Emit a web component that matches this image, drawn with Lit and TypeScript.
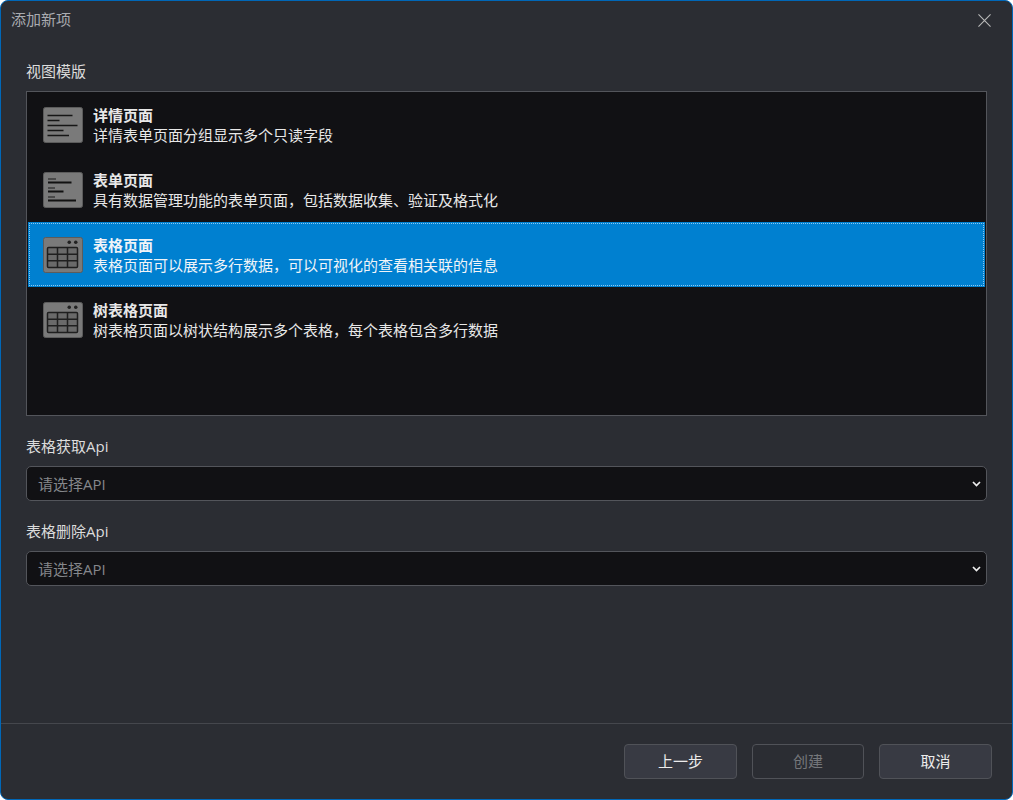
import { LitElement, html, css, svg } from "lit";
import { customElement } from "lit/decorators.js";

const detailIcon = svg`<rect x="0.5" y="0.5" width="39" height="35" rx="2" fill="#7a7a7a" stroke="#5c5c5c"/>
<g stroke="#161616" stroke-width="1.3"><path d="M4.500 8.500h25M4.500 13.500h12M4.500 18.500h30M4.500 23.500h16M4.500 28.500h21.500"/></g>`;
const formIcon = svg`<rect x="0.5" y="0.5" width="39" height="35" rx="2" fill="#7a7a7a" stroke="#5c5c5c"/>
<path d="M5 7h8M5 16h7M5 25h7" stroke="#3a3a3a" stroke-width="1.300"/>
<path d="M5 10.500h23.500M5 19.500h15.500M5 28.500h28" stroke="#111" stroke-width="2.200"/>`;
const tableIcon = svg`<rect x="0.5" y="0.5" width="39" height="35" rx="2" fill="#7a7a7a" stroke="#5c5c5c"/>
<rect x="24.500" y="3.500" width="3.500" height="3.500" rx="1.700" fill="#222"/><rect x="31" y="3.500" width="3.500" height="3.500" rx="1.700" fill="#222"/>
<rect x="4.500" y="10.500" width="30" height="20" rx="1" fill="#6a6a6a" stroke="#1f1f1f" stroke-width="1.500"/>
<path d="M14.500 10.500v20M24.500 10.500v20M4.500 17.200h30M4.500 23.800h30" stroke="#1f1f1f" stroke-width="1.500" fill="none"/>`;

const items = [
  { t: "详情页面", d: "详情表单页面分组显示多个只读字段", i: detailIcon },
  { t: "表单页面", d: "具有数据管理功能的表单页面，包括数据收集、验证及格式化", i: formIcon },
  { t: "表格页面", d: "表格页面可以展示多行数据，可以可视化的查看相关联的信息", i: tableIcon, sel: true },
  { t: "树表格页面", d: "树表格页面以树状结构展示多个表格，每个表格包含多行数据", i: tableIcon },
];

@customElement("app-root")
export class AppRoot extends LitElement {
  static styles = css`
    :host { display: block; }
    * { box-sizing: border-box; }
    .win {
      width: 1013px; height: 800px; display: flex; flex-direction: column;
      background: #2b2d33; border: 1px solid #0067b8; border-radius: 8px;
      font-family: "Open Sans", "Noto Sans CJK SC", sans-serif;
      font-size: 15px; color: #e6e6e6; overflow: hidden;
    }
    .head { height: 37px; flex: none; display: flex; align-items: center; justify-content: space-between; padding: 0 21px 0 10px; }
    .title { color: #a9abb0; line-height: 20px; margin-top: -2px; }
    .close { width: 13px; height: 13px; display: block; margin-top: 1px; }
    .body { flex: 1; padding: 0 25px; display: flex; flex-direction: column; }
    .label { height: 20px; line-height: 20px; color: #dcdcdc; }
    .l1 { margin-top: 23px; margin-bottom: 10px; }
    .list { height: 325px; background: #111114; border: 1px solid #53555b; flex: none; padding: 0 1px; }
    .item { height: 65px; display: flex; padding: 15px 0 0 15px; gap: 10px; color: #e8e8e8; }
    .item.sel { background: #0080d0; outline: 1px dotted #8cc8ee; outline-offset: -2px; color: #f0f4f8; }
    .icon { width: 40px; height: 36px; flex: none; display: block; }
    .txt { display: flex; flex-direction: column; margin-top: -1px; }
    .txt b { font-weight: 700; line-height: 19px; }
    .txt span { line-height: 20px; }
    .l2 { margin-top: 20px; margin-bottom: 10px; }
    .l3 { margin-top: 20px; margin-bottom: 10px; }
    .select {
      height: 35px; flex: none; background: #111114; border: 1px solid #53555b; border-radius: 5px;
      display: flex; align-items: center; justify-content: space-between; padding: 0 5px 0 11px; color: #85878b;
    }
    .select span { margin-top: -1px; }
    .chev { width: 9px; height: 6px; display: block; }
    .foot {
      flex: none; height: 76px; border-top: 1px solid #45474d; display: flex; justify-content: flex-end;
      align-items: flex-start; padding: 20px 20px 0 0; gap: 15px;
    }
    .btn {
      width: 113px; height: 35px; border: 1px solid #505258; border-radius: 4px; background: #383a43;
      display: flex; align-items: center; justify-content: center; color: #ececec; font: inherit; padding: 0 0 2px;
    }
    .btn.dis { background: #2b2d33; color: #75777b; width: 112px; }
  `;

  render() {
    return html`<div class="win">
      <div class="head">
        <span class="title">添加新项</span>
        <svg class="close" viewBox="0 0 14 14"><path d="M.5.5l13 13M13.500.5l-13 13" stroke="#b8b8b8" stroke-width="1.200" fill="none"/></svg>
      </div>
      <div class="body">
        <div class="label l1">视图模版</div>
        <div class="list">
          ${items.map(
            (x) => html`<div class="item ${x.sel ? "sel" : ""}">
              <svg class="icon" viewBox="0 0 40 36">${x.i}</svg>
              <div class="txt"><b>${x.t}</b><span>${x.d}</span></div>
            </div>`
          )}
        </div>
        <div class="label l2">表格获取Api</div>
        <div class="select"><span>请选择API</span>
          <svg class="chev" viewBox="0 0 9 6"><path d="M1 1l3.500 3.500L8 1" stroke="#eee" stroke-width="1.700" fill="none"/></svg></div>
        <div class="label l3">表格删除Api</div>
        <div class="select"><span>请选择API</span>
          <svg class="chev" viewBox="0 0 9 6"><path d="M1 1l3.500 3.500L8 1" stroke="#eee" stroke-width="1.700" fill="none"/></svg></div>
      </div>
      <div class="foot">
        <button class="btn">上一步</button>
        <button class="btn dis">创建</button>
        <button class="btn">取消</button>
      </div>
    </div>`;
  }
}
